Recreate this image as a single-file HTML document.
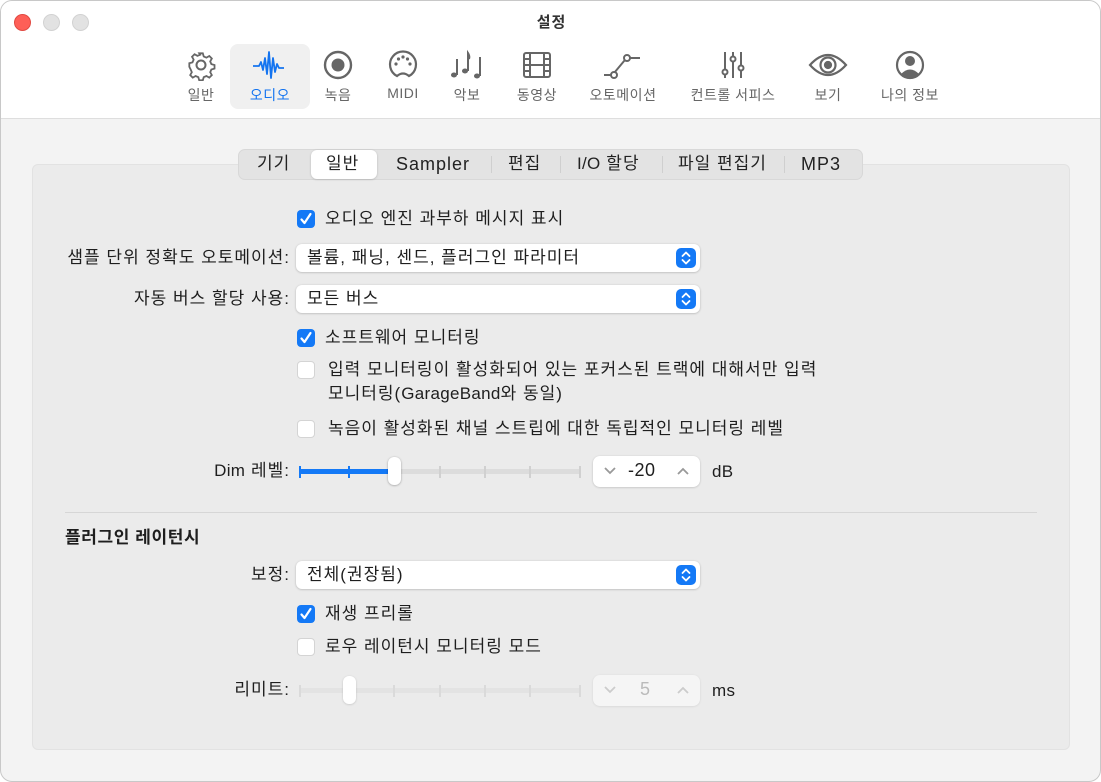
<!DOCTYPE html>
<html><head><meta charset="utf-8"><style>
*{box-sizing:border-box;margin:0;padding:0}
body{width:1101px;height:782px;background:#fff;font-family:"Liberation Sans","Noto Sans CJK KR",sans-serif;color:#1e1e1e;position:relative;overflow:hidden;font-size:17px;letter-spacing:1px}
.l{letter-spacing:0.3px}
.win{position:absolute;left:0;top:0;width:1101px;height:782px;border:1px solid #c8c8c8;border-radius:12px;overflow:hidden;background:#f3f3f3}
.top{position:absolute;left:0;top:0;width:1101px;height:118px;background:#fff;border-bottom:1px solid #dedede}
.dot{position:absolute;top:13px;width:17px;height:17px;border-radius:50%;background:#e2e2e2;border:1px solid #d2d2d2}
.title{position:absolute;top:10px;left:0;width:1101px;text-align:center;font-weight:bold;font-size:15px;color:#333;letter-spacing:1px}
.tb{position:absolute;top:48px;width:130px;margin-left:-65px;text-align:center;color:#666;font-size:14px;letter-spacing:0.5px}
.tb svg{display:block;margin:0 auto 4px;height:32px}
.sel{position:absolute;left:229px;top:43px;width:80px;height:65px;background:#f0f0f0;border-radius:8px}
.panel{position:absolute;left:31px;top:163px;width:1038px;height:586px;background:#ebebeb;border:1px solid #e2e2e2;border-radius:6px}
.seg{position:absolute;left:237px;top:148px;width:625px;height:31px;background:#e3e3e3;border:1px solid #d8d8d8;border-radius:7px}
.s{position:absolute;top:152px;font-size:17px;color:#222;line-height:22px;height:22px;letter-spacing:1px;white-space:nowrap}
.sep{position:absolute;top:155px;width:1px;height:17px;background:#cfcfcf}
.t{position:absolute;white-space:nowrap;line-height:22px}
.r{text-align:right}
.cb{position:absolute;width:18px;height:18px;border-radius:4px;background:#1479f6}
.cb svg{position:absolute;left:2px;top:2px}
.ub{position:absolute;width:18px;height:18px;border-radius:4px;background:#fff;border:1px solid #d4d4d4}
.pop{position:absolute;left:295px;width:404px;height:28px;background:#fff;border-radius:6px;box-shadow:0 0.5px 2px rgba(0,0,0,.25)}
.pop span{position:absolute;left:11px;top:3px;line-height:22px}
.pb{position:absolute;right:4px;top:4px;width:20px;height:20px;border-radius:5px;background:#1479f6}
.track{position:absolute;height:5px;background:#dcdcdc;border-radius:3px}
.tick{position:absolute;width:2px;height:12px;background:#d0d0d0}
.knob{position:absolute;width:13px;height:28px;background:#fff;border-radius:6px;box-shadow:0 0.5px 2px rgba(0,0,0,.35)}
.step{position:absolute;width:107px;height:31px;background:#fff;border-radius:7px;box-shadow:0 0.5px 2px rgba(0,0,0,.2);letter-spacing:1px}
</style></head><body>
<div class="win">
<div class="top">
<div class="dot" style="left:13px;background:#fe5f57;border-color:#e14942"></div>
<div class="dot" style="left:42px"></div>
<div class="dot" style="left:71px"></div>
<div class="title">설정</div>
<div class="sel"></div>

<div class="tb" style="left:200px"><svg width="32" height="32" viewBox="0 0 32 32" fill="none" stroke="#666" stroke-width="2"><path d="M14 3h4l1 3.5 3 1.3 3.2-1.8 2.8 2.8-1.8 3.2 1.3 3 3.5 1v4l-3.5 1-1.3 3 1.8 3.2-2.8 2.8-3.2-1.8-3 1.3-1 3.5h-4l-1-3.5-3-1.3-3.2 1.8-2.8-2.8 1.8-3.2-1.3-3L3 18v-4l3.5-1 1.3-3L6 6.8 8.8 4 12 5.8l3-1.3z" transform="scale(.9) translate(1.8,1.8)"/><circle cx="16" cy="16" r="4.5"/></svg>일반</div>
<div class="tb" style="left:269px;color:#1474f0"><svg width="36" height="32" viewBox="0 0 36 32" fill="none" stroke="#1474f0" stroke-width="1.8" stroke-linejoin="round"><path d="M1 17h6l2-4 2 8 2-12 2 16 2-22 2 26 2-20 2 14 2-8 2 4h5"/></svg>오디오</div>
<div class="tb" style="left:337px"><svg width="32" height="32" viewBox="0 0 32 32"><circle cx="16" cy="16" r="13" fill="none" stroke="#666" stroke-width="2.4"/><circle cx="16" cy="16" r="6.5" fill="#666"/></svg>녹음</div>
<div class="tb" style="left:402px"><svg width="32" height="32" viewBox="0 0 32 32" fill="none" stroke="#666" stroke-width="2.2"><path d="M10 27A13 13 0 1 1 22 27q-6-5-12 0z"/><g fill="#666" stroke="none"><circle cx="9" cy="15" r="1.6"/><circle cx="23" cy="15" r="1.6"/><circle cx="11.5" cy="10" r="1.6"/><circle cx="20.5" cy="10" r="1.6"/><circle cx="16" cy="8" r="1.6"/></g></svg>MIDI</div>
<div class="tb" style="left:466px"><svg width="34" height="32" viewBox="0 0 34 32" fill="#666" stroke="#666" stroke-width="2"><ellipse cx="4" cy="26" rx="3" ry="2.5" stroke="none"/><path d="M7 26V10" fill="none"/><ellipse cx="15" cy="22" rx="3" ry="2.5" stroke="none"/><path d="M18 22V4q2 3 1 6" fill="none"/><ellipse cx="27" cy="27" rx="3" ry="2.5" stroke="none"/><path d="M30 27V8" fill="none"/></svg>악보</div>
<div class="tb" style="left:536px"><svg width="32" height="32" viewBox="0 0 32 32" fill="none" stroke="#666" stroke-width="2"><rect x="3" y="4" width="26" height="24" rx="2"/><path d="M9 4v24M23 4v24M9 16h14M3 10h6M3 16h6M3 22h6M23 10h6M23 16h6M23 22h6"/></svg>동영상</div>
<div class="tb" style="left:622px"><svg width="44" height="32" viewBox="0 0 44 32" fill="none" stroke="#666" stroke-width="2"><path d="M3 26h7M13.5 23.5l10-12M29 9h10"/><circle cx="13" cy="26" r="3"/><circle cx="26" cy="9" r="3"/></svg>오토메이션</div>
<div class="tb" style="left:732px"><svg width="32" height="32" viewBox="0 0 32 32" fill="none" stroke="#666" stroke-width="2"><path d="M8 3v17M8 26v3M16 3v4M16 13v16M24 3v13M24 22v7"/><circle cx="8" cy="23" r="2.5"/><circle cx="16" cy="10" r="2.5"/><circle cx="24" cy="19" r="2.5"/></svg>컨트롤 서피스</div>
<div class="tb" style="left:827px"><svg width="40" height="32" viewBox="0 0 40 32" fill="none" stroke="#666" stroke-width="2.2"><path d="M2 16Q20-4 38 16Q20 36 2 16z"/><circle cx="20" cy="16" r="7.5"/><circle cx="20" cy="16" r="3" fill="#666"/></svg>보기</div>
<div class="tb" style="left:909px"><svg width="32" height="32" viewBox="0 0 32 32"><circle cx="16" cy="16" r="13" fill="none" stroke="#666" stroke-width="2.2"/><circle cx="16" cy="12" r="5" fill="#666"/><path d="M7 25q9-9 18 0q-9 7-18 0z" fill="#666"/></svg>나의 정보</div>
</div>

<div class="panel"></div>
<div class="seg"></div>
<div style="position:absolute;left:310px;top:149px;width:66px;height:29px;background:#fff;border-radius:6px;box-shadow:0 0.5px 2px rgba(0,0,0,.2)"></div>
<div class="s" style="left:256px">기기</div>
<div class="s" style="left:325px">일반</div>
<div class="s l" style="left:395px;font-size:18px">Sampler</div>
<div class="sep" style="left:490px"></div>
<div class="s" style="left:507px">편집</div>
<div class="sep" style="left:559px"></div>
<div class="s" style="left:576px"><span class="l">I/O</span> 할당</div>
<div class="sep" style="left:661px"></div>
<div class="s" style="left:677px">파일 편집기</div>
<div class="sep" style="left:783px"></div>
<div class="s l" style="left:800px;font-size:18px">MP3</div>

<div class="cb" style="left:296px;top:209px"><svg width="14" height="14" viewBox="0 0 14 14"><path d="M2.5 7.5l3 3.5 6-9" fill="none" stroke="#fff" stroke-width="2.2" stroke-linecap="round" stroke-linejoin="round"/></svg></div>
<div class="t" style="left:324px;top:207px">오디오 엔진 과부하 메시지 표시</div>

<div class="t r" style="left:0;width:289px;top:246px">샘플 단위 정확도 오토메이션:</div>
<div class="pop" style="top:243px"><span>볼륨, 패닝, 센드, 플러그인 파라미터</span><div class="pb"><svg width="20" height="20" viewBox="0 0 20 20" fill="none" stroke="#fff" stroke-width="1.8" stroke-linecap="round" stroke-linejoin="round"><path d="M6.5 8l3.5-3.5L13.5 8M6.5 12l3.5 3.5 3.5-3.5"/></svg></div></div>

<div class="t r" style="left:0;width:289px;top:287px">자동 버스 할당 사용:</div>
<div class="pop" style="top:284px"><span>모든 버스</span><div class="pb"><svg width="20" height="20" viewBox="0 0 20 20" fill="none" stroke="#fff" stroke-width="1.8" stroke-linecap="round" stroke-linejoin="round"><path d="M6.5 8l3.5-3.5L13.5 8M6.5 12l3.5 3.5 3.5-3.5"/></svg></div></div>

<div class="cb" style="left:296px;top:328px"><svg width="14" height="14" viewBox="0 0 14 14"><path d="M2.5 7.5l3 3.5 6-9" fill="none" stroke="#fff" stroke-width="2.2" stroke-linecap="round" stroke-linejoin="round"/></svg></div>
<div class="t" style="left:324px;top:326px">소프트웨어 모니터링</div>

<div class="ub" style="left:296px;top:360px"></div>
<div class="t" style="left:327px;top:357px;line-height:24px">입력 모니터링이 활성화되어 있는 포커스된 트랙에 대해서만 입력<br>모니터링(<span class="l">GarageBand</span>와 동일)</div>

<div class="ub" style="left:296px;top:419px"></div>
<div class="t" style="left:327px;top:417px">녹음이 활성화된 채널 스트립에 대한 독립적인 모니터링 레벨</div>

<div class="t r" style="left:0;width:289px;top:459px"><span class="l">Dim</span> 레벨:</div>
<div class="track" style="left:298px;top:468px;width:282px"></div>
<div class="track" style="left:298px;top:468px;width:96px;background:#1479f6"></div>
<div class="tick" style="left:298px;top:465px;background:#1479f6"></div>
<div class="tick" style="left:347px;top:465px;background:#1479f6"></div>
<div class="tick" style="left:438px;top:465px"></div>
<div class="tick" style="left:483px;top:465px"></div>
<div class="tick" style="left:528px;top:465px"></div>
<div class="tick" style="left:578px;top:465px"></div>
<div class="knob" style="left:387px;top:456px"></div>
<div class="step" style="left:592px;top:455px"><svg style="position:absolute;left:10px;top:10px" width="14" height="10" viewBox="0 0 14 10" fill="none" stroke="#999" stroke-width="1.8"><path d="M2 2l5 5 5-5"/></svg><span style="position:absolute;left:35px;top:4px;font-size:18px;letter-spacing:0.5px">-20</span><svg style="position:absolute;right:10px;top:10px" width="14" height="10" viewBox="0 0 14 10" fill="none" stroke="#999" stroke-width="1.8"><path d="M2 8l5-5 5 5"/></svg></div>
<div class="t l" style="left:711px;top:460px">dB</div>

<div style="position:absolute;left:64px;top:511px;width:972px;height:1px;background:#d6d6d6"></div>
<div class="t" style="left:64px;top:526px;font-weight:bold;letter-spacing:0.6px">플러그인 레이턴시</div>

<div class="t r" style="left:0;width:289px;top:563px">보정:</div>
<div class="pop" style="top:560px"><span>전체(권장됨)</span><div class="pb"><svg width="20" height="20" viewBox="0 0 20 20" fill="none" stroke="#fff" stroke-width="1.8" stroke-linecap="round" stroke-linejoin="round"><path d="M6.5 8l3.5-3.5L13.5 8M6.5 12l3.5 3.5 3.5-3.5"/></svg></div></div>

<div class="cb" style="left:296px;top:604px"><svg width="14" height="14" viewBox="0 0 14 14"><path d="M2.5 7.5l3 3.5 6-9" fill="none" stroke="#fff" stroke-width="2.2" stroke-linecap="round" stroke-linejoin="round"/></svg></div>
<div class="t" style="left:324px;top:602px">재생 프리롤</div>
<div class="ub" style="left:296px;top:637px"></div>
<div class="t" style="left:324px;top:635px">로우 레이턴시 모니터링 모드</div>

<div class="t r" style="left:0;width:289px;top:678px">리미트:</div>
<div class="track" style="left:298px;top:687px;width:282px;background:#e3e3e3"></div>
<div class="tick" style="left:298px;top:684px;background:#dadada"></div>
<div class="tick" style="left:392px;top:684px;background:#dadada"></div>
<div class="tick" style="left:438px;top:684px;background:#dadada"></div>
<div class="tick" style="left:483px;top:684px;background:#dadada"></div>
<div class="tick" style="left:528px;top:684px;background:#dadada"></div>
<div class="tick" style="left:578px;top:684px;background:#dadada"></div>
<div class="knob" style="left:342px;top:675px;box-shadow:0 0.5px 2px rgba(0,0,0,.18)"></div>
<div class="step" style="left:592px;top:674px;background:#f5f5f5;box-shadow:0 0.5px 2px rgba(0,0,0,.1)"><svg style="position:absolute;left:10px;top:10px" width="14" height="10" viewBox="0 0 14 10" fill="none" stroke="#ccc" stroke-width="1.8"><path d="M2 2l5 5 5-5"/></svg><span style="position:absolute;left:47px;top:4px;font-size:18px;color:#bbb">5</span><svg style="position:absolute;right:10px;top:10px" width="14" height="10" viewBox="0 0 14 10" fill="none" stroke="#ccc" stroke-width="1.8"><path d="M2 8l5-5 5 5"/></svg></div>
<div class="t l" style="left:711px;top:679px">ms</div>
</div>
</body></html>
